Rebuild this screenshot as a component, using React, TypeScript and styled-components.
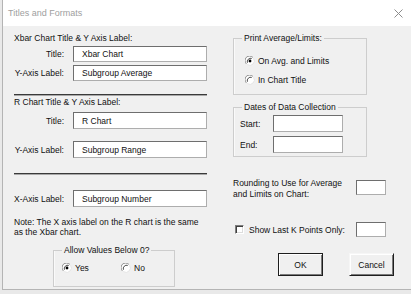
import React from 'react'
import styled, { createGlobalStyle } from 'styled-components'

const Global = createGlobalStyle`
  html, body {
    margin: 0;
    padding: 0;
    background: #e9e9e9;
  }
  body {
    font-family: "Liberation Sans", Arial, sans-serif;
  }
`

const Window = styled.div`
  margin-left: 2px;
  width: 409px;
  height: 290px;
  background: #f0f0f0;
  border-left: 1px solid #b4b4b4;
  border-bottom: 1px solid #b4b4b4;
  box-sizing: border-box;
  display: flex;
  flex-direction: column;
`

const TitleBar = styled.div`
  height: 26px;
  flex: none;
  background: #ffffff;
  display: flex;
  align-items: center;
  justify-content: space-between;
  padding: 0 8px 0 5px;
  color: #a0a0a0;
  font-size: 9px;
`

const Body = styled.div`
  display: flex;
  gap: 26px;
  padding: 7px 0 0 11px;
  font-size: 8.5px;
  line-height: 10px;
  color: #111;
`

const LeftCol = styled.div`
  width: 193px;
  display: flex;
  flex-direction: column;
`

const RightCol = styled.div`
  width: 161px;
  display: flex;
  flex-direction: column;
`

const Heading = styled.div<{ $mt?: number }>`
  margin-top: ${p => p.$mt ?? 0}px;
  height: 10px;
`

const FieldRow = styled.div<{ $mt: number }>`
  display: grid;
  grid-template-columns: 50px 134px;
  column-gap: 9px;
  align-items: center;
  margin-top: ${p => p.$mt}px;
`

const Label = styled.span`
  text-align: right;
  white-space: nowrap;
`

const TextBox = styled.div<{ $w?: number; $h?: number; $mt?: number }>`
  box-sizing: border-box;
  width: ${p => (p.$w ? p.$w + 'px' : '100%')};
  height: ${p => p.$h ?? 16}px;
  margin-top: ${p => p.$mt ?? 0}px;
  background: #fff;
  border: 1px solid #adadad;
  border-left-color: #6e6e6e;
  border-top-color: #6e6e6e;
  padding-left: 8px;
  display: flex;
  align-items: center;
  color: #111;
`

const Separator = styled.div<{ $mt: number }>`
  margin-top: ${p => p.$mt}px;
  height: 0;
  border-top: 1px solid #3a3a3a;
  border-bottom: 1px solid #a8a8a8;
`

const Note = styled.div`
  margin-top: 10px;
  line-height: 10px;
`

const Group = styled.fieldset<{ $mt?: number; $ml?: number; $w: number }>`
  margin: ${p => p.$mt ?? 0}px 0 0 ${p => p.$ml ?? 0}px;
  width: ${p => p.$w}px;
  box-sizing: border-box;
  border: 1px solid #cdcdcd;
  box-shadow: inset 1px 0 #fafafa;
  padding: 0;
  min-width: 0;
`

const GroupInner = styled.div<{ $pt: number; $pb: number; $pl: number }>`
  padding: ${p => p.$pt}px 4px ${p => p.$pb}px ${p => p.$pl}px;
`

const Legend = styled.legend`
  margin-left: 8px;
  padding: 0 2px;
  line-height: 10px;
  height: 10px;
`

const RadioRow = styled.div<{ $mt?: number }>`
  display: flex;
  align-items: center;
  height: 12px;
  margin-top: ${p => p.$mt ?? 0}px;
`

const RadioItem = styled.label<{ $w?: number }>`
  display: flex;
  align-items: center;
  gap: 3px;
  width: ${p => (p.$w ? p.$w + 'px' : 'auto')};
`

const DateRow = styled.div<{ $mt?: number }>`
  display: flex;
  align-items: center;
  margin-top: ${p => p.$mt ?? 0}px;
`

const DateLabel = styled.span`
  width: 33px;
`

const OptionRow = styled.div<{ $mt: number }>`
  display: flex;
  align-items: flex-start;
  justify-content: space-between;
  margin-top: ${p => p.$mt}px;
  padding-right: 8px;
`

const TwoLine = styled.div`
  line-height: 11px;
`

const CheckLabel = styled.label`
  display: flex;
  align-items: center;
  gap: 5px;
  padding-left: 2px;
  height: 15px;
`

const CheckBox = styled.span`
  width: 9px;
  height: 9px;
  box-sizing: border-box;
  background: #fff;
  border: 1px solid #ffffff;
  border-left-color: #7d7d7d;
  border-top-color: #7d7d7d;
  box-shadow: inset 1px 1px #404040, inset -1px -1px #dcdcdc;
`

const ButtonRow = styled.div`
  display: flex;
  justify-content: flex-end;
  gap: 26px;
  margin-top: 16px;
`

const Button = styled.button<{ $default?: boolean }>`
  width: 45px;
  height: 23px;
  box-sizing: border-box;
  font-family: inherit;
  font-size: 8.5px;
  color: #111;
  background: #f0f0f0;
  padding: 0;
  border: 1px solid ${p => (p.$default ? '#1e1e1e' : '#f6f6f6')};
  border-right-color: #1e1e1e;
  border-bottom-color: #1e1e1e;
  box-shadow: inset 1px 1px #ffffff, inset -1px -1px #7a7a7a;
`

function Radio({ checked }: { checked?: boolean }) {
  return (
    <svg width="10" height="10" viewBox="0 0 12 12">
      <circle cx="6" cy="6" r="5.3" fill="#fff" />
      <path d="M1.6 9.4 A5.3 5.3 0 0 1 9.4 1.6" stroke="#8a8a8a" strokeWidth="1.2" fill="none" />
      <path d="M2.9 8.1 A4.1 4.1 0 0 1 8.1 2.9" stroke="#3a3a3a" strokeWidth="1.1" fill="none" />
      <path d="M10.2 2.8 A5.3 5.3 0 0 1 2.8 10.2" stroke="#e2e2e2" strokeWidth="1.1" fill="none" />
      {checked && <circle cx="6" cy="6" r="1.7" fill="#000" />}
    </svg>
  )
}

function Close() {
  return (
    <svg width="9" height="9" viewBox="0 0 9 9">
      <path d="M0.5 0.5 L8.5 8.5 M8.5 0.5 L0.5 8.5" stroke="#8c8c8c" strokeWidth="1" />
    </svg>
  )
}

export default function App() {
  return (
    <>
      <Global />
      <Window>
        <TitleBar>
          <span>Titles and Formats</span>
          <Close />
        </TitleBar>
        <Body>
          <LeftCol>
            <Heading>Xbar Chart Title &amp; Y Axis Label:</Heading>
            <FieldRow $mt={3}>
              <Label>Title:</Label>
              <TextBox>Xbar Chart</TextBox>
            </FieldRow>
            <FieldRow $mt={3}>
              <Label>Y-Axis Label:</Label>
              <TextBox>Subgroup Average</TextBox>
            </FieldRow>
            <Separator $mt={13} />
            <Heading $mt={1}>R Chart Title &amp; Y Axis Label:</Heading>
            <FieldRow $mt={5}>
              <Label>Title:</Label>
              <TextBox $h={17}>R Chart</TextBox>
            </FieldRow>
            <FieldRow $mt={12}>
              <Label>Y-Axis Label:</Label>
              <TextBox $h={17}>Subgroup Range</TextBox>
            </FieldRow>
            <Separator $mt={15} />
            <FieldRow $mt={15}>
              <Label>X-Axis Label:</Label>
              <TextBox $h={17}>Subgroup Number</TextBox>
            </FieldRow>
            <Note>
              Note: The X axis label on the R chart is the same
              <br />
              as the Xbar chart.
            </Note>
            <Group $mt={8} $ml={39} $w={122}>
              <Legend>Allow Values Below 0?</Legend>
              <GroupInner $pt={7} $pb={12} $pl={8}>
                <RadioRow>
                  <RadioItem $w={59}>
                    <Radio checked />
                    Yes
                  </RadioItem>
                  <RadioItem>
                    <Radio />
                    No
                  </RadioItem>
                </RadioRow>
              </GroupInner>
            </Group>
          </LeftCol>
          <RightCol>
            <Group $w={134}>
              <Legend>Print Average/Limits:</Legend>
              <GroupInner $pt={12} $pb={8} $pl={11}>
                <RadioRow>
                  <RadioItem>
                    <Radio checked />
                    On Avg. and Limits
                  </RadioItem>
                </RadioRow>
                <RadioRow $mt={7}>
                  <RadioItem>
                    <Radio />
                    In Chart Title
                  </RadioItem>
                </RadioRow>
              </GroupInner>
            </Group>
            <Group $mt={7} $w={134}>
              <Legend>Dates of Data Collection</Legend>
              <GroupInner $pt={3} $pb={3} $pl={6}>
                <DateRow>
                  <DateLabel>Start:</DateLabel>
                  <TextBox $w={70} $h={17} />
                </DateRow>
                <DateRow $mt={4}>
                  <DateLabel>End:</DateLabel>
                  <TextBox $w={70} $h={17} />
                </DateRow>
              </GroupInner>
            </Group>
            <OptionRow $mt={21}>
              <TwoLine>
                Rounding to Use for Average
                <br />
                and Limits on Chart:
              </TwoLine>
              <TextBox $w={30} $h={15} $mt={2} />
            </OptionRow>
            <OptionRow $mt={22}>
              <CheckLabel>
                <CheckBox />
                Show Last K Points Only:
              </CheckLabel>
              <TextBox $w={30} $h={15} />
            </OptionRow>
            <ButtonRow>
              <Button $default>OK</Button>
              <Button>Cancel</Button>
            </ButtonRow>
          </RightCol>
        </Body>
      </Window>
    </>
  )
}
